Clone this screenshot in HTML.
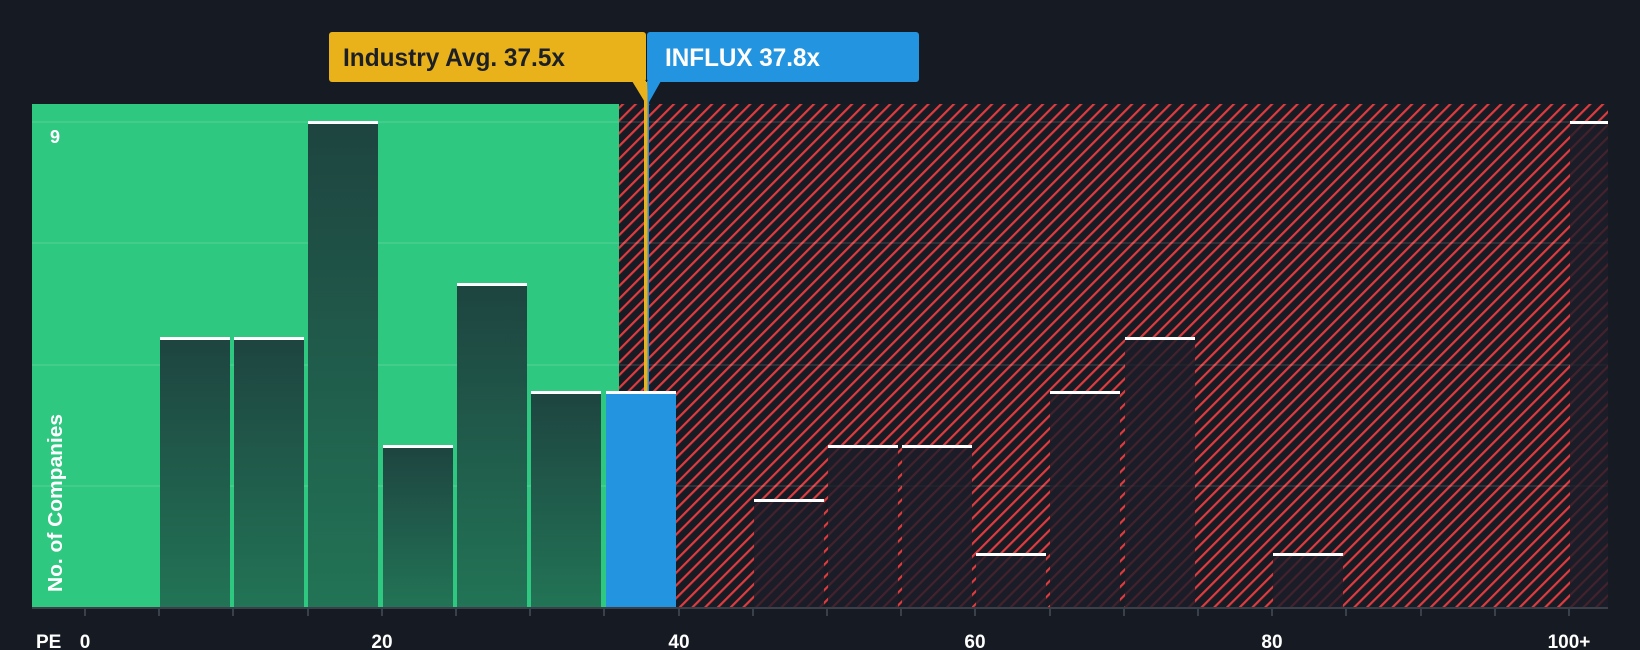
<!DOCTYPE html>
<html><head><meta charset="utf-8"><style>
html,body{margin:0;padding:0;background:#151a23;}
svg{display:block;font-family:"Liberation Sans",sans-serif;}
</style></head><body>
<svg width="1640" height="650" viewBox="0 0 1640 650" xmlns="http://www.w3.org/2000/svg">
<defs>
<pattern id="h" width="9" height="9" patternUnits="userSpaceOnUse" patternTransform="rotate(45)">
<rect x="0" y="0" width="2.2" height="9" fill="#e03b3f"/>
</pattern>
<linearGradient id="g" x1="0" y1="0" x2="0" y2="1">
<stop offset="0" stop-color="#1e4440"/><stop offset="1" stop-color="#227456"/>
</linearGradient>
</defs>
<rect width="1640" height="650" fill="#151a23"/>
<rect x="32" y="104" width="587" height="504" fill="#2ec880"/>
<rect x="619" y="104" width="989" height="504" fill="#161b24"/>
<rect x="619" y="104" width="989" height="504" fill="url(#h)"/>
<g stroke="#ffffff" stroke-opacity="0.1" stroke-width="2">
<line x1="32" y1="122" x2="1608" y2="122"/>
<line x1="32" y1="243" x2="1608" y2="243"/>
<line x1="32" y1="365" x2="1608" y2="365"/>
<line x1="32" y1="486" x2="1608" y2="486"/>
</g>
<g fill="url(#g)">
<rect x="160" y="338" width="70" height="270"/>
<rect x="234" y="338" width="70" height="270"/>
<rect x="308" y="122" width="70" height="486"/>
<rect x="383" y="446" width="70" height="162"/>
<rect x="457" y="284" width="70" height="324"/>
<rect x="531" y="392" width="70" height="216"/>
</g>
<rect x="606" y="392" width="70" height="216" fill="#2394e0"/>
<g fill="#1c1d28" fill-opacity="0.8">
<rect x="754" y="500" width="70" height="108"/>
<rect x="828" y="446" width="70" height="162"/>
<rect x="902" y="446" width="70" height="162"/>
<rect x="976" y="554" width="70" height="54"/>
<rect x="1050" y="392" width="70" height="216"/>
<rect x="1125" y="338" width="70" height="270"/>
<rect x="1273" y="554" width="70" height="54"/>
<rect x="1570" y="122" width="38" height="486"/>
</g>
<g fill="#ffffff">
<rect x="160" y="337" width="70" height="3"/>
<rect x="234" y="337" width="70" height="3"/>
<rect x="308" y="121" width="70" height="3"/>
<rect x="383" y="445" width="70" height="3"/>
<rect x="457" y="283" width="70" height="3"/>
<rect x="531" y="391" width="70" height="3"/>
<rect x="606" y="391" width="70" height="3"/>
<rect x="754" y="499" width="70" height="3"/>
<rect x="828" y="445" width="70" height="3"/>
<rect x="902" y="445" width="70" height="3"/>
<rect x="976" y="553" width="70" height="3"/>
<rect x="1050" y="391" width="70" height="3"/>
<rect x="1125" y="337" width="70" height="3"/>
<rect x="1273" y="553" width="70" height="3"/>
<rect x="1570" y="121" width="38" height="3"/>
</g>
<rect x="644" y="82" width="3.5" height="309" fill="#e9b21a"/>
<rect x="647.5" y="82" width="1.5" height="309" fill="#2394e0"/>
<rect x="329" y="32" width="317" height="50" rx="3" fill="#e9b21a"/>
<path d="M632 81 L646 81 L646 104 Z" fill="#e9b21a"/>
<text x="343" y="66" font-size="25" font-weight="bold" fill="#1c1f26" textLength="222" lengthAdjust="spacingAndGlyphs">Industry Avg. 37.5x</text>
<rect x="647" y="32" width="272" height="50" rx="3" fill="#2394e0"/>
<path d="M647 81 L661 81 L648 104 Z" fill="#2394e0"/>
<text x="665" y="66" font-size="25" font-weight="bold" fill="#ffffff" textLength="155" lengthAdjust="spacingAndGlyphs">INFLUX 37.8x</text>
<rect x="32" y="607" width="1576" height="2" fill="#3a404a"/>
<g stroke="#3a404a" stroke-width="2">
<line x1="85" y1="608" x2="85" y2="616"/><line x1="159" y1="608" x2="159" y2="616"/>
<line x1="233" y1="608" x2="233" y2="616"/><line x1="308" y1="608" x2="308" y2="616"/>
<line x1="382" y1="608" x2="382" y2="616"/><line x1="456" y1="608" x2="456" y2="616"/>
<line x1="530" y1="608" x2="530" y2="616"/><line x1="604" y1="608" x2="604" y2="616"/>
<line x1="679" y1="608" x2="679" y2="616"/><line x1="753" y1="608" x2="753" y2="616"/>
<line x1="827" y1="608" x2="827" y2="616"/><line x1="901" y1="608" x2="901" y2="616"/>
<line x1="975" y1="608" x2="975" y2="616"/><line x1="1050" y1="608" x2="1050" y2="616"/>
<line x1="1124" y1="608" x2="1124" y2="616"/><line x1="1198" y1="608" x2="1198" y2="616"/>
<line x1="1272" y1="608" x2="1272" y2="616"/><line x1="1346" y1="608" x2="1346" y2="616"/>
<line x1="1421" y1="608" x2="1421" y2="616"/><line x1="1495" y1="608" x2="1495" y2="616"/>
<line x1="1569" y1="608" x2="1569" y2="616"/>
</g>
<g font-size="19" font-weight="bold" fill="#ffffff">
<text x="36" y="648">PE</text>
<text x="85" y="648" text-anchor="middle">0</text>
<text x="382" y="648" text-anchor="middle">20</text>
<text x="679" y="648" text-anchor="middle">40</text>
<text x="975" y="648" text-anchor="middle">60</text>
<text x="1272" y="648" text-anchor="middle">80</text>
<text x="1569" y="648" text-anchor="middle">100+</text>
<text x="50" y="143" font-size="18">9</text>
</g>
<text transform="translate(62,592) rotate(-90)" font-size="20" font-weight="bold" fill="#ffffff" textLength="178" lengthAdjust="spacingAndGlyphs">No. of Companies</text>
</svg>
</body></html>
